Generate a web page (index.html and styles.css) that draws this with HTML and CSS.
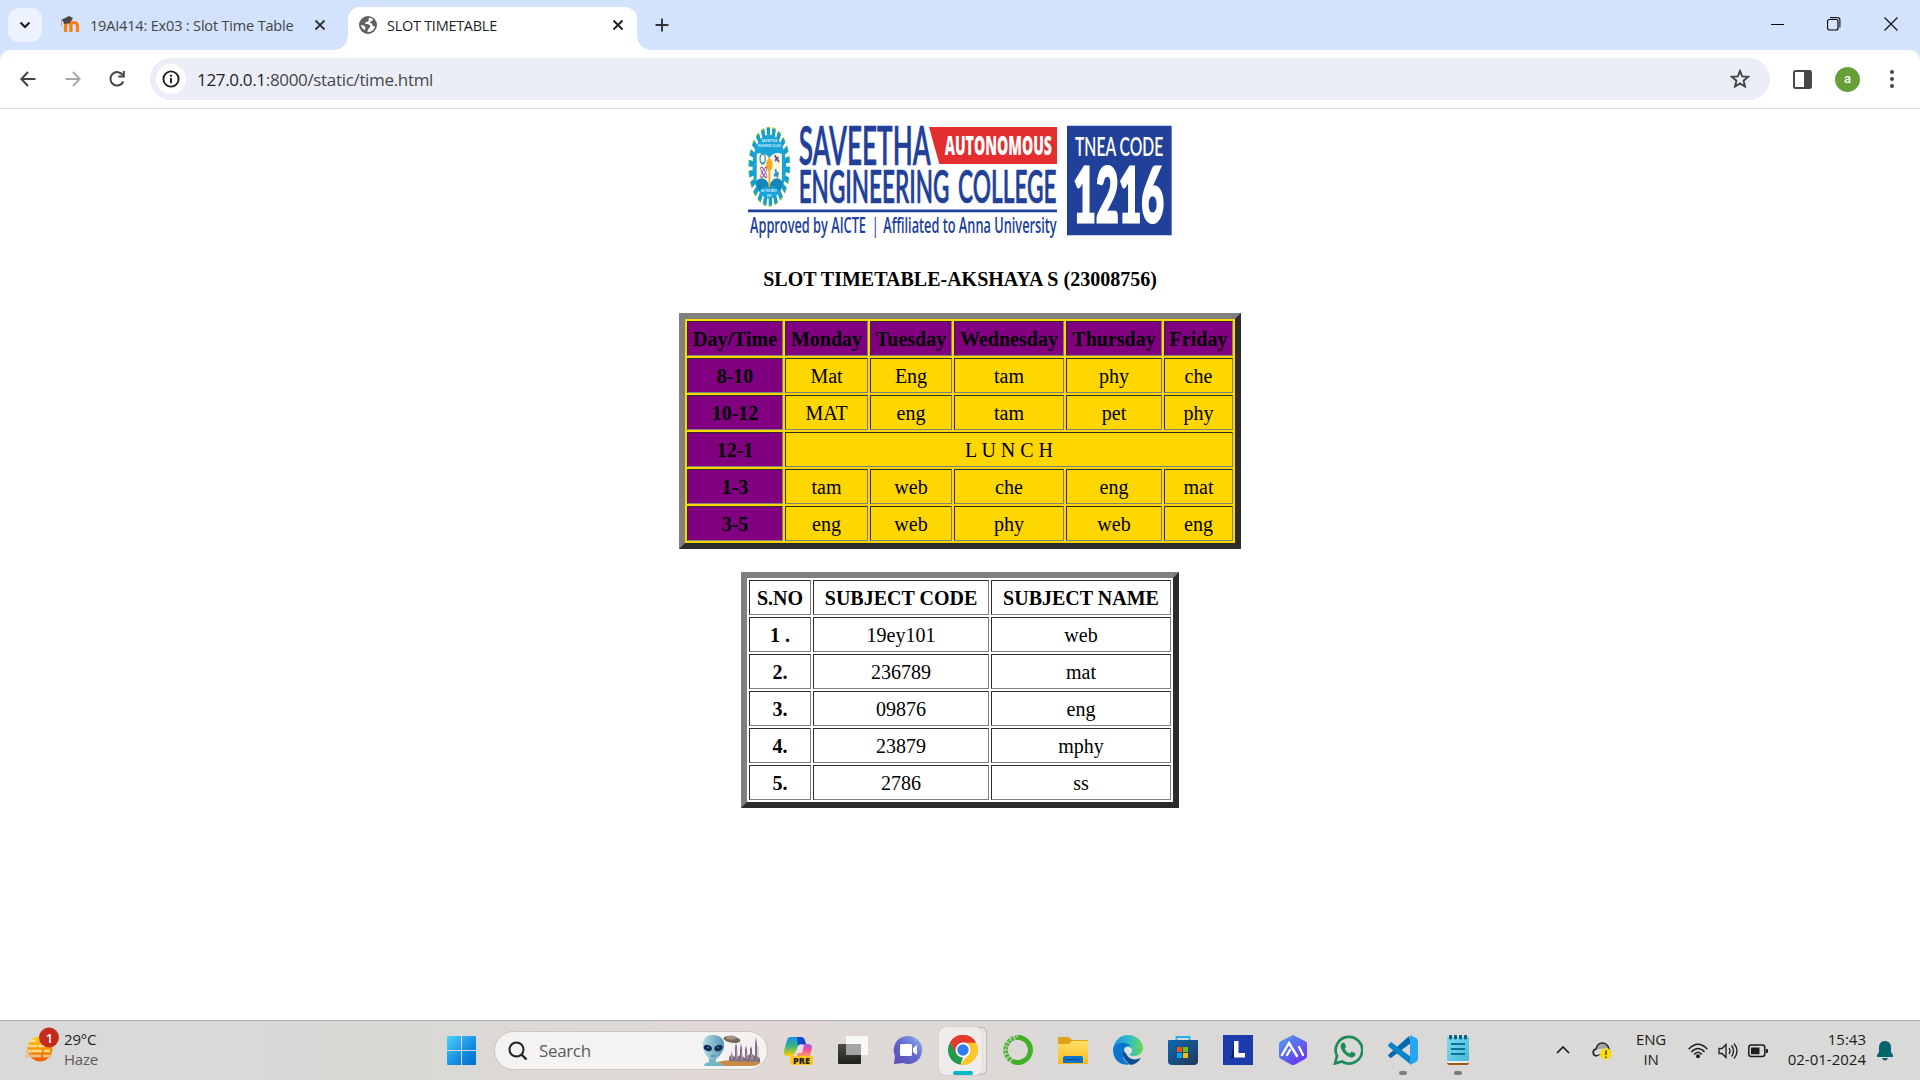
FILE: index.html
```html
<!DOCTYPE html>
<html lang="en">
<head>
<meta charset="utf-8">
<title>SLOT TIMETABLE</title>
<link rel="stylesheet" href="styles.css">
</head>
<body>
<header class="tabstrip">
  <button class="tab-search"><svg width="12" height="8" viewBox="0 0 12 8"><path d="M1.5 1.5 6 6l4.500-4.500" fill="none" stroke="#1f1f1f" stroke-width="2.200"/></svg></button>
  <div class="tab tab-idle">
    <svg class="favicon" width="20" height="20" viewBox="0 0 20 20"><path d="M5.500 17V10.500q0-3 2.700-3t2.700 3V17M10.900 10.500q0-3 3-3t3.600 3V17" fill="none" stroke="#f98012" stroke-width="3.200"/><path d="M1 5 9 1l4 2-3 5-6 1-1-3Z" fill="#4c4745"/><path d="M1.500 5.500v6" stroke="#c9a173"/></svg>
    <span class="tab-title title-idle">19AI414: Ex03 : Slot Time Table</span>
    <svg class="close" width="12" height="12" viewBox="0 0 12 12"><path d="m1.500 1.500 9 9m0-9-9 9" stroke="#333" stroke-width="1.800"/></svg>
  </div>
  <div class="tab tab-active">
    <svg class="favicon" width="18" height="18" viewBox="0 0 18 18"><circle cx="9" cy="9" r="9" fill="#5f6368"/><path d="M10 1.800c-.8 1.600.4 2.400-.8 3.400-1.200.9-3 .4-3.200 1.900-.1 1.500 2.900.8 4.600 1.900 1.500 1 .3 2.800-.8 3.600-1 .8-1.200 2.400-1.400 3.500a7.300 7.300 0 0 0 7.700-5.700c-1.200.1-2.600-.4-2.900-1.800-.3-1.500-1.200-1.700-2.600-1.900 1.400-1.900 3-1.200 3.500-3.100A7.200 7.200 0 0 0 10 1.800ZM1.800 9c2 .2 4.400 1 4.700 2.400.2 1.100-.8 1.300-.7 2.800A7.200 7.200 0 0 1 1.800 9Z" fill="#fff"/></svg>
    <span class="tab-title title-active">SLOT TIMETABLE</span>
    <svg class="close" width="12" height="12" viewBox="0 0 12 12"><path d="m1.500 1.500 9 9m0-9-9 9" stroke="#1f1f1f" stroke-width="1.900"/></svg>
  </div>
  <svg class="new-tab" width="14" height="14" viewBox="0 0 14 14"><path d="M7 0.500v13M.5 7h13" stroke="#333" stroke-width="1.900"/></svg>
  <div class="window-controls">
    <svg width="14" height="14" viewBox="0 0 14 14"><path d="M1 7.500h13" stroke="#000"/></svg>
    <svg width="14" height="14" viewBox="0 0 14 14"><rect x=".5" y="2.500" width="10.500" height="10.500" rx="2" fill="none" stroke="#000" stroke-width="1.200"/><path d="M3 .6h7.500q2.400 0 2.400 2.400v7.500" fill="none" stroke="#222" stroke-width="1.200"/></svg>
    <svg width="14" height="14" viewBox="0 0 14 14"><path d="m.5.5 13 13m0-13-13 13" stroke="#111" stroke-width="1.200"/></svg>
  </div>
</header>
<nav class="toolbar">
  <svg class="nav-icon" width="16" height="16" viewBox="0 0 16 16"><path d="M15.500 8H1.500M8 1 1.300 8 8 15" fill="none" stroke="#444" stroke-width="2"/></svg>
  <svg class="nav-icon" width="16" height="16" viewBox="0 0 16 16"><path d="M.5 8h14M8 1l6.700 7L8 15" fill="none" stroke="#a8a8a8" stroke-width="1.900"/></svg>
  <svg class="nav-icon" width="17" height="16" viewBox="0 0 17 16"><path d="M14.300 10.500A6.700 6.700 0 1 1 13.800 4.200" fill="none" stroke="#444" stroke-width="2"/><path d="M15.800 0v6.500H9.300V4.500h4.500V0Z" fill="#444"/></svg>
  <div class="omnibox">
    <span class="site-info"><svg width="18" height="18" viewBox="0 0 18 18"><circle cx="9" cy="9" r="7.600" fill="none" stroke="#1f1f1f" stroke-width="1.900"/><path d="M9 8v5.200M9 4.700v2" stroke="#1f1f1f" stroke-width="1.900"/></svg></span>
    <span class="url"><b>127.0.0.1</b>:8000/static/time.html</span>
    <svg class="star" width="20" height="20" viewBox="0 0 20 20"><path d="m10 2 2.200 5.400 5.800.5-4.400 3.800 1.400 5.800-5-3.100-5 3.100 1.400-5.800L2 7.900l5.800-.5Z" fill="none" stroke="#444" stroke-width="1.900"/></svg>
  </div>
  <svg class="side-panel" width="19" height="19" viewBox="0 0 19 19"><rect x="1" y="1" width="17" height="17" rx="1.500" fill="none" stroke="#474747" stroke-width="2"/><path d="M11 1h7v17h-7z" fill="#474747"/></svg>
  <span class="avatar">a</span>
  <svg class="menu-dots" width="4" height="18" viewBox="0 0 4 18"><g fill="#444"><circle cx="2" cy="2" r="2"/><circle cx="2" cy="9" r="2"/><circle cx="2" cy="16" r="2"/></g></svg>
</nav>

<main class="page">
  <svg class="logo" width="424" height="114" viewBox="54 45 1272 342" role="img" aria-label="Saveetha Engineering College">
    <g transform="translate(118 170) scale(.525 1)">
      <circle r="106" fill="none" stroke="#8fc640" stroke-width="28" stroke-dasharray="18 12.270"/>
      <circle r="103" fill="none" stroke="#129fd4" stroke-width="26" stroke-dasharray="17.500 11.920"/>
      <circle r="96" fill="#19a4d9"/>
      <path d="M-72-38Q-30-48 0-26 30-48 72-38V50Q26 46 0 66-26 46-72 50Z" fill="#fff6dc"/>
      <path d="M-78 45Q-30 20 0 56 30 20 78 45L62 74 20 58 0 66-20 58-62 74Z" fill="#1385b9"/>
      <path d="M0-28v90" stroke="#e7ad35" stroke-width="10"/><ellipse cy="-6" rx="18" ry="18" fill="#f5a81c"/>
      <circle cx="-38" cy="-24" r="15" fill="none" stroke="#2797cb" stroke-width="7"/>
      <path d="m30-34 26 20m-24-4 20-10" stroke="#71509b" stroke-width="8"/>
      <path d="m26 26 28-6m-20-12 14 24" stroke="#2797cb" stroke-width="10"/>
      <g fill="none" stroke="#8c4da5" stroke-width="4"><ellipse cx="-32" cy="17" rx="22" ry="7" transform="rotate(40 -32 17)"/><ellipse cx="-32" cy="17" rx="22" ry="7" transform="rotate(-40 -32 17)"/></g>
    </g>
    <g class="logo-tiny">
      <text x="95" y="96" textLength="46" lengthAdjust="spacingAndGlyphs">SAVEETHA</text>
      <text x="84" y="110" textLength="68" lengthAdjust="spacingAndGlyphs">ENGINEERING COLLEGE</text>
      <text x="94" y="247" textLength="46" lengthAdjust="spacingAndGlyphs">BE THE BEST</text>
      <text x="111" y="261" textLength="14" lengthAdjust="spacingAndGlyphs">EST</text>
    </g>
    <g class="logo-name">
      <text x="206" y="166" textLength="396" lengthAdjust="spacingAndGlyphs">SAVEETHA</text>
      <text x="206" y="280" textLength="452" lengthAdjust="spacingAndGlyphs">ENGINEERING</text>
      <text x="684" y="280" textLength="296" lengthAdjust="spacingAndGlyphs">COLLEGE</text>
    </g>
    <path d="M597 51H981V162H628Z" fill="#e32d2e"/>
    <text class="logo-auto" x="644" y="135" textLength="322" lengthAdjust="spacingAndGlyphs">AUTONOMOUS</text>
    <path d="M54 302.500H981" stroke="#21409a" stroke-width="8"/>
    <g class="logo-sub">
      <text x="60" y="370" textLength="348" lengthAdjust="spacingAndGlyphs">Approved by AICTE</text>
      <text x="427" y="370" textLength="18" lengthAdjust="spacingAndGlyphs">|</text>
      <text x="460" y="370" textLength="520" lengthAdjust="spacingAndGlyphs">Affiliated to Anna University</text>
    </g>
    <path d="M1011 47H1325V376H1011Z" fill="#21409a"/>
    <text class="logo-tnea" x="1035" y="139" textLength="265" lengthAdjust="spacingAndGlyphs">TNEA CODE</text>
    <text class="logo-code" x="1030" y="337" textLength="272" lengthAdjust="spacingAndGlyphs">1216</text>
  </svg>
  <h1 class="heading">SLOT TIMETABLE-AKSHAYA S (23008756)</h1>
  <table class="grid slots">
    <colgroup><col class="w96"><col class="w83"><col class="w82"><col class="w110"><col class="w96"><col class="w69"></colgroup>
    <tr><th>Day/Time</th><th>Monday</th><th>Tuesday</th><th>Wednesday</th><th>Thursday</th><th>Friday</th></tr>
    <tr><th>8-10</th><td>Mat</td><td>Eng</td><td>tam</td><td>phy</td><td>che</td></tr>
    <tr><th>10-12</th><td>MAT</td><td>eng</td><td>tam</td><td>pet</td><td>phy</td></tr>
    <tr><th>12-1</th><td colspan="5">L U N C H</td></tr>
    <tr><th>1-3</th><td>tam</td><td>web</td><td>che</td><td>eng</td><td>mat</td></tr>
    <tr><th>3-5</th><td>eng</td><td>web</td><td>phy</td><td>web</td><td>eng</td></tr>
  </table>
  <table class="grid subjects">
    <colgroup><col class="w62"><col class="w176"><col class="w180"></colgroup>
    <tr><th>S.NO</th><th>SUBJECT CODE</th><th>SUBJECT NAME</th></tr>
    <tr><th>1 .</th><td>19ey101</td><td>web</td></tr>
    <tr><th>2.</th><td>236789</td><td>mat</td></tr>
    <tr><th>3.</th><td>09876</td><td>eng</td></tr>
    <tr><th>4.</th><td>23879</td><td>mphy</td></tr>
    <tr><th>5.</th><td>2786</td><td>ss</td></tr>
  </table>
</main>

<footer class="taskbar">
  <div class="weather">
    <svg width="36" height="38" viewBox="0 0 36 38">
      <defs><linearGradient id="sun" x2="0" y2="1"><stop offset="0" stop-color="#ffd000"/><stop offset="1" stop-color="#f05a0a"/></linearGradient></defs>
      <circle cx="15" cy="22" r="12.500" fill="url(#sun)"/>
      <g stroke="#fbdc8c" stroke-width="2.400" stroke-linecap="round"><path d="M6 14h4M4 19h7M14 19h5M4 24h12M20 24h4" /><path d="M1 25h5M1 29h14M19 29h7" stroke="#e3c488"/></g>
      <circle cx="24" cy="10.500" r="10" fill="#c42b1c"/><text class="badge" x="24.500" y="15.500" text-anchor="middle">1</text>
    </svg>
    <div class="two-line"><span>29°C</span><span class="muted">Haze</span></div>
  </div>
  <svg class="start" width="29" height="29" viewBox="0 0 29 29"><defs><linearGradient id="win" x2="1" y2="1"><stop offset="0" stop-color="#4cd1ff"/><stop offset=".6" stop-color="#138be0"/><stop offset="1" stop-color="#056bcd"/></linearGradient></defs><path d="M1 0h13v14H0V1q0-1 1-1Zm14 0h13q1 0 1 1v13H15ZM0 15h14v14H1q-1 0-1-1Zm15 0h14v13q0 1-1 1H15Z" fill="url(#win)"/></svg>
  <div class="search">
    <svg width="20" height="20" viewBox="0 0 20 20"><circle cx="8.500" cy="8.500" r="7" fill="none" stroke="#222" stroke-width="2"/><path d="m13.500 13.500 5 5" stroke="#222" stroke-width="2.400"/></svg>
    <span>Search</span>
    <svg class="alien" width="62" height="34" viewBox="0 0 62 34">
      <defs><linearGradient id="skin"><stop stop-color="#b2dde5"/><stop offset="1" stop-color="#5495b0"/></linearGradient></defs>
      <path d="M16 28q16-4 44 0-3 4-10 4H16Z" fill="#c98a45"/>
      <path d="M28 27v-4l2-2v-5l1 5 3 2V13l1-4 1 4v10l3-2v-6l1-6 1 6v7l3 2v-8l1-5 1 5v6l3-2v-5l1-3 1 3v5l3 2V10l1-7 1 7v12l3 2v4Z" fill="#807087"/><path d="M31 25v-5m5 5V15m5 11v-7m5 6v-6m5 7v-6m6 5V12" stroke="#c4a9ae"/>
      <ellipse cx="31" cy="5.500" rx="8.500" ry="3.300" fill="#776858" transform="rotate(9 31 5.500)"/><ellipse cx="30" cy="3.500" rx="5" ry="2" fill="#a59684"/>
      <path d="M8 24h7v4q7 1 8 4H3q0-3 5-4Z" fill="#73b6c8"/>
      <path d="M12 1C4 1 1 7 2 13c0 6 6 13 10 13s10-7 11-13C24 6 20 1 12 1Z" fill="url(#skin)"/>
      <ellipse cx="6.800" cy="14" rx="4.300" ry="2.900" fill="#102b55" transform="rotate(25 6.800 14)"/><ellipse cx="17.500" cy="14" rx="4.300" ry="2.900" fill="#102b55" transform="rotate(-25 17.500 14)"/><circle cx="7" cy="13.500" r="1" fill="#367abb"/><circle cx="17" cy="13.500" r="1" fill="#367abb"/><path d="M10 22h4" stroke="#34738c"/>
    </svg>
  </div>
  <div class="apps">
    <span class="app"><svg width="30" height="30" viewBox="0 0 30 30"><defs><linearGradient id="cpa" x2="0" y2="1"><stop stop-color="#1693e8"/><stop offset=".5" stop-color="#3bb67c"/><stop offset="1" stop-color="#ffd100"/></linearGradient><linearGradient id="cpb" x2="0" y2="1"><stop stop-color="#a25be8"/><stop offset=".5" stop-color="#f05299"/><stop offset="1" stop-color="#ff9a60"/></linearGradient></defs><path d="M7 2h11q3 0 4 4l1 3h-5q-3 0-4 4l-2 5q-1 3-4 3H4q-4 0-3-5L4 5q1-3 3-3Z" fill="url(#cpa)"/><path d="M14 2h4q3 0 4 4l1 3h-5q-2 0-3 2Z" fill="#1149cb"/><path d="M18 9h7q4 0 4 4l-2 8H14Z" fill="url(#cpb)"/><path d="m16 11-2 7h5l2-8q-4-1-5 1Z" fill="#f1ddea"/><rect x="7" y="21" width="23" height="9" rx="2.500" fill="#ffc619"/><text class="pre" x="10" y="28.600" textLength="17" lengthAdjust="spacingAndGlyphs">PRE</text></svg></span>
    <span class="app"><svg width="30" height="30" viewBox="0 0 30 30"><defs><linearGradient id="tv" x2="0" y2="1"><stop stop-color="#4b4b49"/><stop offset="1" stop-color="#20201f"/></linearGradient></defs><rect y="9" width="23" height="20" rx="1" fill="url(#tv)"/><path d="M8 1h21q1 0 1 1v17q0 1-1 1H8Z" fill="#fff" opacity=".82"/><path d="M8 9h15v11H8z" fill="#a5a5a5"/></svg></span>
    <span class="app"><svg width="30" height="30" viewBox="0 0 30 30"><defs><linearGradient id="chat" x1="1" x2="0" y2="1"><stop stop-color="#8db3f8"/><stop offset=".5" stop-color="#6568c8"/><stop offset="1" stop-color="#5a49b5"/></linearGradient></defs><path d="M15 1a14 14 0 1 1-5 27L1 29l1-8A14 14 0 0 1 15 1Z" fill="url(#chat)"/><rect x="7" y="9" width="12" height="12" rx="1.500" fill="#fff"/><path d="m20 13 4-3v10l-4-3Z" fill="#fff"/></svg></span>
    <span class="app app-current"><svg width="30" height="30" viewBox="0 0 30 30"><path d="M15 15 2 7.500A15 15 0 0 1 28 7.500Z" fill="#e33b2e"/><path d="M2 7.500 8.900 18.500 15 22 12.500 29.800A15 15 0 0 1 2 7.500Z" fill="#229b4e"/><path d="M28 7.500A15 15 0 0 1 12.500 29.800L21.100 18.500 21.500 11 15 7.500Z" fill="#fcc628"/><path d="M15 7.500h13a15 15 0 0 0-26 0l6.500 11Z" fill="#e33b2e"/><circle cx="15" cy="15" r="7.500" fill="#fff"/><circle cx="15" cy="15" r="5.700" fill="#347af0"/></svg><i class="running current"></i></span>
    <span class="app"><svg width="30" height="30" viewBox="0 0 30 30"><path d="M15 2.500a12.500 12.500 0 1 1-5 24" fill="none" stroke="#43b02a" stroke-width="5"/><path d="M15 2.500A12.500 12.500 0 0 0 11 26.800" fill="none" stroke="#43b02a" stroke-width="4.500" stroke-dasharray="3 1"/><path d="M15 1.500A13.500 13.500 0 0 0 8 26" fill="none" stroke="#dad9d6" stroke-width="1" stroke-dasharray="2 2.500"/></svg></span>
    <span class="app"><svg width="30" height="30" viewBox="0 0 30 30"><defs><linearGradient id="fold" x2="0" y2="1"><stop stop-color="#ffdf68"/><stop offset="1" stop-color="#fbb91c"/></linearGradient></defs><path d="M0 3q0-1 1-1h9q1 0 2 1l2 2h15q1 0 1 1v8H0Z" fill="#e2a11b"/><path d="M0 10q0-1 1-1h10l3-3h15q1 0 1 1v21q0 1-1 1H0Z" fill="url(#fold)"/><path d="M5 28v-5q0-2 2-2h16q2 0 2 2v5Z" fill="#0874ca"/><path d="M8.500 24.800h13" stroke="#044d8e" stroke-width="1.200"/></svg></span>
    <span class="app"><svg width="30" height="30" viewBox="0 0 30 30"><defs><linearGradient id="edge"><stop stop-color="#168ed8"/><stop offset=".5" stop-color="#2dbbd0"/><stop offset="1" stop-color="#68d850"/></linearGradient></defs><path d="M0 15C1 6 7 0 15 0s15 6 15 13c0 5-4 8-9 8-4 0-6-2-4-4 3-5-2-8-7-8-5 0-9 3-10 6Z" fill="url(#edge)"/><path d="M0 15c1-5 5-7 10-7 4 0 8 2 8 6-3-2-8 0-8 6 0 5 3 8 8 9C7 32 0 24 0 15Z" fill="#0876cf"/><path d="M13 12c-6 6-3 13 5 18 5-1 8-4 10-7-9 4-17-1-15-11Z" fill="#0c4c91"/><path d="M17 12c-4 0-6 4-4 7-4-4-1-9 4-7Z" fill="#e9f1f3"/><circle cx="15.500" cy="15.500" r="3.500" fill="#e2e5e5"/></svg></span>
    <span class="app"><svg width="30" height="30" viewBox="0 0 30 30"><defs><linearGradient id="store" x2="1" y2="1"><stop stop-color="#0c66b4"/><stop offset="1" stop-color="#253757"/></linearGradient></defs><path d="M8.500 6V2h13v4" fill="none" stroke="#27aef0" stroke-width="1.800"/><path d="M1 5h28q1 0 1 1v20q0 4-4 4H4q-4 0-4-4V6q0-1 1-1Z" fill="url(#store)"/><path d="M9 12h5v5H9z" fill="#f15224"/><path d="M15 12h5v5h-5z" fill="#7fba00"/><path d="M9 18h5v5H9z" fill="#00a7ed"/><path d="M15 18h5v5h-5z" fill="#ffb900"/></svg></span>
    <span class="app"><svg width="30" height="30" viewBox="0 0 30 30"><path d="M0 0h30v30H0z" fill="#1d3aac"/><path d="m11 7-3 16h4l3-3Z" fill="#0b235c"/><path d="M11 6h4.500v12H22v4.500H11Z" fill="#fff"/></svg></span>
    <span class="app"><svg width="30" height="30" viewBox="0 0 30 30"><defs><linearGradient id="hex" x2=".8" y2="1"><stop stop-color="#50a4ec"/><stop offset="1" stop-color="#6830f0"/></linearGradient></defs><path d="m15 0 12 6q2 1 2 3v12q0 2-2 3l-9 5q-3 2-6 0l-9-5q-2-1-2-3V9q0-2 2-3Z" fill="url(#hex)"/><path d="m4 20 7-12 8 13M9 20l3-5m9-3 4 8" fill="none" stroke="#fff" stroke-width="2.400" stroke-linecap="round"/></svg></span>
    <span class="app"><svg width="30" height="30" viewBox="0 0 30 30"><path d="M2 28.500 4 21A13.300 13.300 0 1 1 9 26.500Z" fill="none" stroke="#1d8d58" stroke-width="2.700"/><path d="M9 8q1-1 2.500 0l1.700 3.500-1.500 2.500q1.500 3 5 4.500l2-2 3.500 1.800q1 .7 0 2.300c-2 3-5 1.700-7 .8C12 20 9 16.500 8 13.500 7 11 8 9 9 8Z" fill="#1d8d58"/></svg></span>
    <span class="app"><svg width="30" height="30" viewBox="0 0 30 30"><path d="M0 20 21 1l2 7L3 23q-3-1-3-3Z" fill="#0868ae"/><path d="m0 10 3-3 20 15-1 7L1 12q-1-1-1-2Z" fill="#0b83cc"/><path d="m22 0 6 3q2 1 2 3v18q0 2-2 3l-6 3Z" fill="#27a7f2"/></svg><i class="running"></i></span>
    <span class="app"><svg width="24" height="30" viewBox="0 0 24 30"><defs><linearGradient id="note" x2="1" y2="1"><stop stop-color="#7fdbee"/><stop offset="1" stop-color="#44b9d7"/></linearGradient></defs><path d="M1 26h22v1q0 3-2 3H3q-2 0-2-3Z" fill="#a65716"/><path d="M1 2h22v24q0 2-1 2H2q-1 0-1-2Z" fill="#e8eef0"/><path d="M1 2h22v23q0 1-1 1H2q-1 0-1-1Z" fill="url(#note)"/><path d="M5 9h14M5 14h14M5 19h14" stroke="#08749a" stroke-width="1.800"/><path d="M4.500 1v2m5-2v2m5-2v2m5-2v2" stroke="#095f7c" stroke-width="3" stroke-linecap="round"/></svg><i class="running"></i></span>
  </div>
  <div class="tray">
    <svg class="tray-up" width="14" height="8" viewBox="0 0 14 8"><path d="m1 7 6-6 6 6" fill="none" stroke="#1c1c1c" stroke-width="1.700"/></svg>
    <svg class="cloud" width="20" height="18" viewBox="0 0 20 18"><path d="M4 14C0 13 0 8 4 7 5 3 7 1 10 1c4 0 6 2 7 6l1 5H8Z" fill="#a4a4a4" stroke="#222" stroke-width="1.400"/><path d="M4 13q-4-5 4-6l9-1-8 6Z" fill="#dedddc"/><circle cx="14" cy="12" r="5.800" fill="#f8df00"/><path d="M14 8.500V13m0 1.500V16" stroke="#222" stroke-width="1.300"/></svg>
    <div class="two-line lang"><span>ENG</span><span>IN</span></div>
    <svg class="wifi" width="20" height="16" viewBox="0 0 20 16"><g fill="none" stroke="#1c1c1c" stroke-width="1.500"><path d="M.7 6.200Q10-3.500 19.300 6.200M3.500 9Q10 2 16.500 9M6.200 11.600Q10 7 13.800 11.600"/></g><circle cx="10" cy="13.300" r="2" fill="#1c1c1c"/></svg>
    <svg class="volume" width="20" height="16" viewBox="0 0 20 16"><g fill="none" stroke="#1c1c1c" stroke-width="1.300"><path d="M1 5.500h3l4-4v13l-4-4H1Z"/><path d="M11 5q2 3 0 6m2.500-8.500q4 5.500 0 11M16 .5q6 7.500 0 15"/></g></svg>
    <svg class="battery" width="20" height="14" viewBox="0 0 20 14"><rect x=".8" y="1" width="16" height="11.500" rx="2.500" fill="none" stroke="#1c1c1c" stroke-width="1.500"/><path d="M3 3.500h8.500v6.800H3zM18 5h1q1 0 1 1v2q0 1-1 1h-1Z" fill="#1c1c1c"/></svg>
    <div class="two-line clock"><span>15:43</span><span>02-01-2024</span></div>
    <svg class="bell" width="16" height="20" viewBox="0 0 16 20"><path d="M8 0C4 0 2 3 2 6v5l-2 3v2h16v-2l-2-3V6c0-3-2-6-6-6ZM5 17h6q-1 2.500-3 2.500T5 17Z" fill="#08656e"/></svg>
  </div>
</footer>
</body>
</html>
```
FILE: styles.css
```css
* { box-sizing: border-box; }
body {
  margin: 0;
  width: 1920px;
  height: 1080px;
  overflow: hidden;
  display: flex;
  flex-direction: column;
  background: #d3e2fd;
  font-family: "Open Sans", "Noto Sans", sans-serif;
}
svg { display: block; flex: none; }

/* Tab strip */
.tabstrip { height: 50px; flex: none; display: flex; }
.tab-search {
  width: 34px; height: 34px; margin: 8px 0 0 8px; padding: 0; border: 0;
  border-radius: 11px; background: #ecf3fe;
  display: flex; align-items: center; justify-content: center;
}
.tab { display: flex; align-items: center; font-size: 14.500px; white-space: nowrap; }
.tab-idle { width: 306px; padding: 0 22px 0 18px; color: #444; }
.tab-title { margin-left: 10px; flex: 1; }
.title-idle { letter-spacing: -0.170px; }
.title-active { letter-spacing: -0.280px; }
.tab-active {
  position: relative; width: 289px; height: 43px; margin-top: 7px; padding: 0 13px 7px 11px;
  background: #fff; border-radius: 12px 12px 0 0; color: #1f1f1f;
}
.tab-active::before, .tab-active::after { content: ""; position: absolute; bottom: 0; width: 14px; height: 14px; }
.tab-active::before { left: -14px; background: radial-gradient(circle at 0 0, #d3e2fd 13.500px, #fff 14px); }
.tab-active::after { right: -14px; background: radial-gradient(circle at 100% 0, #d3e2fd 13.500px, #fff 14px); }
.new-tab { margin: 18px 0 0 18px; }
.window-controls { display: flex; gap: 43px; margin: 17px 22px 0 auto; }

/* Toolbar */
.toolbar {
  height: 59px; flex: none; display: flex; align-items: center;
  padding: 0 26px 0 20px; border-bottom: 1px solid #dedede;
  background: #fff; border-radius: 10px 10px 0 0;
}
.nav-icon { margin-right: 29px; }
.nav-icon + .nav-icon { margin-right: 28px; }
.nav-icon + .nav-icon + .nav-icon { margin-right: 24px; }
.omnibox {
  flex: 1; height: 42px; border-radius: 21px; background: #ebeef7;
  display: flex; align-items: center; padding: 0 20px 0 6px;
}
.site-info {
  width: 30px; height: 30px; border-radius: 50%; background: #fff;
  display: flex; align-items: center; justify-content: center;
}
.url { margin-left: 11px; flex: 1; font-size: 17px; letter-spacing: -0.330px; color: #474747; }
.url b { font-weight: 400; color: #1f1f1f; }
.side-panel { margin-left: 23px; }
.avatar {
  width: 25px; height: 25px; margin: 0 30px 0 23px; border-radius: 50%;
  background: #689f38; color: #fff; font: 500 13px/24px Roboto, sans-serif; text-align: center;
}

/* Page content */
.page {
  flex: 1; display: flex; flex-direction: column; align-items: center; background: #fff;
  padding-top: 16px; font: 20px/23px "Liberation Serif", serif; color: #000;
}
.heading { margin: 28px 0 21px; font-size: 20px; line-height: 25px; font-weight: 700; white-space: nowrap; }
.grid {
  table-layout: fixed; border-collapse: separate; border-spacing: 2px;
  border: 6px solid; border-color: #808080 #2c2c2c #2c2c2c #808080; text-align: center;
}
.grid th, .grid td {
  height: 35px; padding: 2px 0 0; border: 1px solid;
  border-color: #2c2c2c #808080 #808080 #2c2c2c; white-space: nowrap;
}
.slots { width: 562px; background: #ffd700; }
.slots th { background: #800080; }
.subjects { width: 438px; margin-top: 23px; }
.w62 { width: 62px; } .w69 { width: 69px; } .w82 { width: 82px; } .w83 { width: 83px; }
.w96 { width: 96px; } .w110 { width: 110px; } .w176 { width: 176px; } .w180 { width: 180px; }

/* College logo */
.logo { overflow: visible; }
.logo text { font-family: "Open Sans", sans-serif; }
.logo-tiny text { font-size: 10px; font-weight: 700; fill: #d5effa; }
.logo .logo-name text { font: 600 139px Lato, sans-serif; fill: #21409a; stroke: #21409a; stroke-width: 2px; }
.logo .logo-name text:first-child { font-size: 160px; }
.logo .logo-auto { font-size: 77px; font-weight: 800; fill: #fff; }
.logo-sub text { font-size: 64px; font-weight: 600; fill: #21409a; }
.logo .logo-tnea { font: 600 78px Lato, sans-serif; fill: #fff; }
.logo .logo-code { font: 900 231px Lato, sans-serif; fill: #fff; stroke: #fff; stroke-width: 9px; }

/* Taskbar */
.taskbar {
  height: 60px; flex: none; display: flex; align-items: center; border-top: 1px solid #aaa;
  background: linear-gradient(90deg, #d9d9d8 0, #d9d8d5 20%, #dcd9d6 28%, #e1d9d5 38%, #dbd9d7 55%, #d9d9d7 100%);
}
.weather { width: 447px; padding-left: 25px; display: flex; align-items: center; }
.weather svg { margin-top: -9px; }
.badge { font: 600 13px "Open Sans", sans-serif; fill: #fff; }
.two-line {
  display: flex; flex-direction: column; margin-top: -3px;
  font-size: 15px; line-height: 20px; color: #1c1c1c; letter-spacing: -0.200px;
}
.weather .two-line { margin-left: 3px; margin-top: -4px; }
.muted { color: #5d5d5d; }
.search {
  width: 274px; height: 39px; margin: 0 2px 0 18px; padding: 0 4px 0 13px; border: 1px solid #c9c6c4;
  border-radius: 20px; background: #f4f3f2; display: flex; align-items: center;
  font-size: 17px; color: #5b5b5b; overflow: hidden;
}
.search span { margin-left: 11px; flex: 1; letter-spacing: -0.350px; }
.apps { display: flex; margin-top: -1px; }
.app { position: relative; width: 55px; height: 59px; display: flex; align-items: center; justify-content: center; }
.app svg { position: relative; }
.pre { font: 800 8.500px "Open Sans", sans-serif; fill: #222; }
.app-current::before {
  content: ""; position: absolute; left: 4px; top: 6px; width: 43px; height: 48px;
  border-radius: 6px; background: #efedeb; box-shadow: 0 0 1px #999, 5px 0 0 -1px #e9e6e3, 5px 0 1px #bbb;
}
.running { position: absolute; left: 24px; bottom: 5px; width: 8px; height: 4px; border-radius: 2px; background: #7d7d7c; }
.current { left: 18px; width: 20px; background: #04b5c5; }
.tray { margin-left: auto; padding-right: 27px; display: flex; align-items: center; }
.tray-up { margin-top: -1px; }
.cloud { margin-left: 22px; }
.lang { width: 44px; margin-left: 17px; margin-right: 15px; align-items: center; }
.wifi { margin-right: 10px; }
.volume { margin-right: 10px; }
.clock { width: 98px; align-items: flex-end; letter-spacing: 0; }
.bell { margin-left: 11px; }
```
